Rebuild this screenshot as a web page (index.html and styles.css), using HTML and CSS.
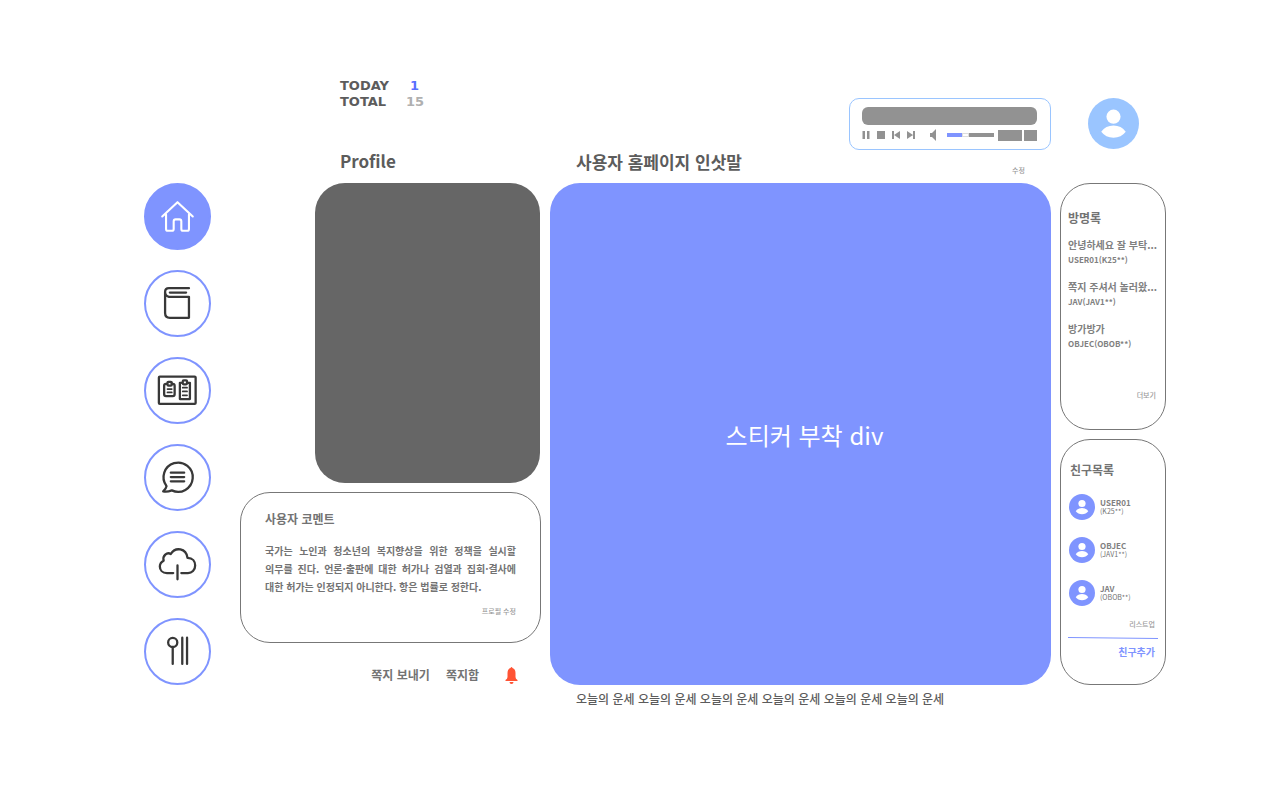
FILE: index.html
```html
<!DOCTYPE html>
<html lang="ko">
<head>
<meta charset="utf-8">
<meta name="viewport" content="width=device-width, initial-scale=1">
<title>사용자 홈페이지</title>
<link rel="stylesheet" href="styles.css">
</head>
<body>
<svg class="defs" aria-hidden="true">
  <symbol id="person" viewBox="0 0 52 52">
    <circle cx="26" cy="26" r="26" fill="currentColor"/>
    <circle cx="26" cy="19" r="7.2" fill="#fff"/>
    <path d="M13.500 34.500Q18 28 26 28T38.500 34.500Q34 40.500 26 40.500T13.500 34.500Z" fill="#fff"/>
  </symbol>
</svg>
<div class="page">
  <header class="left-head">
    <dl class="counts">
      <dt>TODAY</dt><dd class="today">1</dd>
      <dt>TOTAL</dt><dd>15</dd>
    </dl>
    <h2 class="heading">Profile</h2>
  </header>

  <header class="main-head">
    <div class="player">
      <div class="player-screen"></div>
      <div class="controls">
        <button type="button" aria-label="일시정지"><svg viewBox="0 0 8 8"><path d="M0.500 0H3V8H0.500ZM5 0H7.500V8H5Z"/></svg></button>
        <button type="button" aria-label="정지"><svg viewBox="0 0 8 8"><path d="M0 0H8V8H0Z"/></svg></button>
        <button type="button" aria-label="이전 곡"><svg viewBox="0 0 8 8"><path d="M0 0H2V8H0ZM8 0V8L2 4Z"/></svg></button>
        <button type="button" aria-label="다음 곡"><svg viewBox="0 0 8 8"><path d="M6 0H8V8H6ZM0 0V8L6 4Z"/></svg></button>
        <button type="button" class="speaker" aria-label="음소거"><svg viewBox="0 0 6 12"><path d="M0 4H2L6 0V12L2 8H0Z"/></svg></button>
        <input class="volume" type="range" min="0" max="100" value="38" aria-label="음량">
        <button type="button" class="block wide" aria-label="재생 목록"></button>
        <button type="button" class="block" aria-label="반복"></button>
      </div>
    </div>
    <div class="greeting">
      <h1 class="heading">사용자 홈페이지 인삿말</h1>
      <a class="tiny" href="#">수정</a>
    </div>
  </header>

  <a class="account" href="#" aria-label="내 계정"><svg><use href="#person"/></svg></a>

  <nav class="menu" aria-label="메뉴">
    <a class="active" href="#" aria-label="홈"><svg viewBox="0 0 66 66"><path d="M17 33L33 18L49 33M21 31V46Q21 48 23 48H27Q29 48 29 46V38Q29 36 31 36H35Q37 36 37 38V46Q37 48 39 48H43Q45 48 45 46V31"/></svg></a>
    <a href="#" aria-label="책"><svg viewBox="0 0 66 66"><path d="M45 17H24Q20 17 20 21T24 26H45V48H25Q20 48 20 43V21M25 21.500H42"/></svg></a>
    <a href="#" aria-label="게시판"><svg viewBox="0 0 66 66"><rect x="13.500" y="18.500" width="38.500" height="28.500" rx="1"/><path d="M22 26H21Q19 26 19 28V37Q19 39 21 39H28Q30 39 30 37V28Q30 26 28 26H27M37 25H35.500V42H46V25H44"/><rect x="22.500" y="24" width="4.500" height="4" rx="1"/><rect x="38.500" y="22.500" width="4.500" height="4" rx="1"/><path class="fine" d="M22.500 31.500H27M22.500 35H27M38.500 30H43M38.500 34H43M38.500 38H43"/></svg></a>
    <a href="#" aria-label="방명록"><svg viewBox="0 0 66 66"><path d="M21.500 42A15.300 15.300 0 1 1 27 46.500Q22 48.500 18 47.500Q21 45 21.500 42M26 28H40M26 32.500H40M26 37H40"/></svg></a>
    <a href="#" aria-label="나무"><svg viewBox="0 0 66 66"><path d="M28.500 42H22C17 42 14.500 38.500 14.500 35C14.500 32 16.500 30 18.500 29C17 24 22 19.500 26 22C31 14 42 16 43.500 26C49 26 51.500 30 51.500 34C51.500 39 48 42 44 42H37M33 34V48.500"/></svg></a>
    <a href="#" aria-label="도구"><svg viewBox="0 0 66 66"><circle cx="28" cy="23.500" r="4.800"/><path d="M28 28.500V46M38 18.500V46M43 18.500V46"/></svg></a>
  </nav>

  <section class="left">
    <div class="photo"></div>
    <article class="card comment">
      <h3>사용자 코멘트</h3>
      <p>국가는 노인과 청소년의 복지향상을 위한 정책을 실시할 의무를 진다. 언론·출판에 대한 허가나 검열과 집회·결사에 대한 허가는 인정되지 아니한다. 항은 법률로 정한다.</p>
      <a class="tiny" href="#">프로필 수정</a>
    </article>
    <div class="messages">
      <a href="#">쪽지 보내기</a>
      <a href="#">쪽지함</a>
      <button type="button" class="bell" aria-label="알림"><svg viewBox="0 0 12 17"><path d="M5 1Q6-1 7 1Q10 2 10 6V10Q10 12 12 13V14H0V13Q2 12 2 10V6Q2 2 5 1ZM4 15H8Q8 17 6 17T4 15Z"/></svg></button>
    </div>
  </section>

  <main class="stickers">스티커 부착 div</main>

  <aside class="side">
    <section class="card guestbook">
      <h3>방명록</h3>
      <ul>
        <li><a href="#">안녕하세요 잘 부탁...</a><span>USER01(K25**)</span></li>
        <li><a href="#">쪽지 주셔서 놀러왔...</a><span>JAV(JAV1**)</span></li>
        <li><a href="#">방가방가</a><span>OBJEC(OBOB**)</span></li>
      </ul>
      <a class="tiny" href="#">더보기</a>
    </section>
    <section class="card friends">
      <h3>친구목록</h3>
      <ul>
        <li><svg><use href="#person"/></svg><div><b>USER01</b><span>(K25**)</span></div></li>
        <li><svg><use href="#person"/></svg><div><b>OBJEC</b><span>(JAV1**)</span></div></li>
        <li><svg><use href="#person"/></svg><div><b>JAV</b><span>(OBOB**)</span></div></li>
      </ul>
      <a class="tiny" href="#">리스트업</a>
      <svg class="rule" viewBox="0 0 90 2" preserveAspectRatio="none" aria-hidden="true"><path d="M0 0.500L90 1.500"/></svg>
      <button type="button" class="add">친구추가</button>
    </section>
  </aside>

  <footer class="fortune">오늘의 운세 오늘의 운세 오늘의 운세 오늘의 운세 오늘의 운세 오늘의 운세</footer>
</div>
</body>
</html>
```
FILE: styles.css
```css
* { box-sizing: border-box; }

body {
  margin: 0;
  background: #fff;
  color: #737373;
  font-family: "Noto Sans CJK JP", "Noto Sans CJK KR", sans-serif;
  font-size: 12px;
  font-weight: 500;
}

h1, h2, h3, p, ul, dl, dd { margin: 0; padding: 0; }
ul { list-style: none; }
a { color: inherit; text-decoration: none; }
svg { display: block; }
button { padding: 0; border: 0; background: none; color: inherit; font: inherit; cursor: pointer; }
.defs { position: absolute; width: 0; height: 0; }

.page {
  display: grid;
  grid-template-columns: 67px 301px minmax(0, 1fr) 106px;
  grid-template-areas:
    ". lefthead mainhead account"
    "menu left stickers side"
    ". . fortune .";
  column-gap: 9px;
  padding: 78px 114px 40px 144px;
}

.heading { color: #5c5c5c; font-size: 17px; line-height: 24px; font-weight: 700; }
.tiny { color: #999; font-size: 7px; line-height: 10px; }

.left-head {
  grid-area: lefthead;
  display: flex;
  flex-direction: column;
  justify-content: space-between;
  padding: 0 0 10px 100px;
}
.left, .left-head { margin-left: 20px; }
.left-head { padding-left: 100px; }
.page { grid-template-columns: 67px 321px minmax(0, 1fr) 106px; }

.counts {
  display: grid;
  grid-template-columns: 66px 17px;
  color: #5c5c5c;
  font: 700 13px/16px "DejaVu Sans", sans-serif;
}
.counts dd { color: #b0b0b0; text-align: center; }
.counts .today { color: #596fff; }

.main-head {
  grid-area: mainhead;
  display: flex;
  flex-direction: column;
  align-items: flex-end;
  padding-top: 20px;
}
.player {
  width: 202px;
  padding: 8px 13px 8px 12px;
  border: 1px solid #9ac5ff;
  border-radius: 10px;
}
.player-screen { height: 18px; border-radius: 6px; background: #929292; }
.controls { display: flex; align-items: center; height: 12px; margin-top: 4px; }
.controls button { width: 8px; margin-right: 7px; }
.controls svg { width: 100%; fill: #929292; }
.controls .speaker { width: 6px; margin: 0 11px 0 8px; }
.volume {
  appearance: none;
  flex: 1;
  min-width: 0;
  height: 4px;
  margin: 0 4px 0 0;
  background: linear-gradient(to right, #7f94ff 36%, #929292 36%);
}
.volume::-webkit-slider-thumb { appearance: none; width: 7px; height: 4px; border: 1px solid #ddd; background: #fff; }
.controls .block { width: 13px; height: 11px; margin: 0; background: #929292; }
.controls .wide { width: 24px; margin-right: 2px; }

.greeting {
  display: flex;
  align-items: flex-end;
  justify-content: space-between;
  align-self: stretch;
  padding: 0 26px 9px;
}
.greeting .tiny { line-height: 8px; }

.account { grid-area: account; justify-self: center; padding-top: 20px; color: #9ac5ff; }
.account svg { width: 51px; height: 51px; }

.menu { grid-area: menu; display: flex; flex-direction: column; justify-content: space-between; }
.menu a { border: 2px solid #7f94ff; border-radius: 50%; background: #fff; }
.menu svg {
  width: 100%;
  fill: none;
  stroke: #383838;
  stroke-width: 2.4;
  stroke-linecap: round;
  stroke-linejoin: round;
}
.menu .active { background: #7f94ff; }
.menu .active svg { stroke: #fff; stroke-width: 2.2; }
.menu .fine { stroke-width: 1.8; }

.card { border: 1px solid #777; border-radius: 30px; }
.card h3 { font-size: 12px; line-height: 18px; }

.left { grid-area: left; display: flex; flex-direction: column; }
.photo { height: 300px; margin: 0 1px 0 75px; border-radius: 30px; background: #666; }
.comment { display: flex; flex-direction: column; height: 151px; margin-top: 9px; padding: 17px 24px 0; }
.comment p { margin-top: 14px; font-size: 10px; line-height: 18px; font-weight: 700; text-align: justify; word-break: keep-all; }
.comment .tiny { align-self: flex-end; margin-top: 10px; }
.messages { display: flex; align-items: center; justify-content: flex-end; gap: 16px; margin-top: 22px; padding-right: 23px; line-height: 20px; font-weight: 700; }
.bell { margin-left: 10px; }
.bell svg { width: 13px; height: 17px; fill: #ff5334; }

.stickers {
  grid-area: stickers;
  display: grid;
  place-items: center;
  min-height: 501px;
  padding-left: 8px;
  border-radius: 30px;
  background: #7f94ff;
  color: #fff;
  font-size: 24px;
  font-weight: 400;
}

.side { grid-area: side; display: grid; grid-template-rows: 1fr 1fr; gap: 9px; }
.side .card { display: flex; flex-direction: column; padding: 25px 8px 0 7px; }
.side .tiny { align-self: flex-end; }
.guestbook ul { display: grid; gap: 12px; margin-top: 10px; color: #808080; font-weight: 700; }
.guestbook li { display: grid; white-space: nowrap; line-height: 15px; }
.guestbook li a { font-size: 10px; }
.guestbook li span { font-size: 8px; }
.guestbook .tiny { margin: 39px 1px 0 0; }
.side .friends { padding: 21px 7px 0; }
.friends h3 { padding-left: 2px; }
.friends ul { display: grid; gap: 17px; margin-top: 15px; padding-left: 1px; }
.friends li { display: flex; align-items: center; gap: 5px; }
.friends li svg { width: 26px; height: 26px; color: #7f94ff; }
.friends b, .friends span { display: block; line-height: 9px; }
.friends b { font-size: 8px; font-weight: 700; color: #808080; }
.friends span { font-size: 7px; font-weight: 400; }
.friends .tiny { margin: 13px 3px 0 0; }
.rule { width: 100%; height: 2px; margin-top: 8px; stroke: #7f94ff; }
.friends .add { align-self: flex-end; margin: 5px 3px 0 0; color: #7f94ff; font-size: 10px; line-height: 16px; font-weight: 700; }

.fortune { grid-area: fortune; padding: 5px 26px; color: #5c5c5c; line-height: 18px; }
```
